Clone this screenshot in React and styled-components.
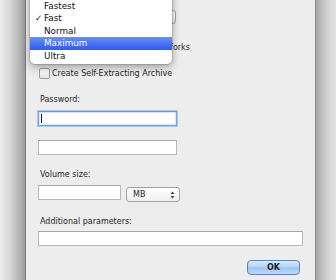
import React from "react";
import styled, { createGlobalStyle } from "styled-components";

const Global = createGlobalStyle`
  html, body { margin: 0; padding: 0; }
  body {
    width: 336px;
    height: 280px;
    overflow: hidden;
    font-family: "DejaVu Sans", "Noto Sans", sans-serif;
    -webkit-font-smoothing: antialiased;
  }
  * { box-sizing: border-box; }
`;

const Page = styled.div`
  display: flex;
  width: 336px;
  height: 280px;
  overflow: hidden;
`;

const Shade = styled.div`
  flex: ${(p) => (p.$side === "left" ? "0 0 25px" : "1 1 auto")};
  background: ${(p) =>
    p.$side === "left"
      ? "linear-gradient(to right, #ebebeb 0%, #d6d6d6 40%, #b2b2b2 80%, #9a9a9a 100%)"
      : "linear-gradient(to right, #a6a6a6 0%, #c4c4c4 35%, #d8d8d8 70%, #e2e2e2 100%)"};
`;

const Panel = styled.div`
  position: relative;
  flex: 0 0 291px;
  background: #ededed;
  border-left: 1px solid #7e7e7e;
  border-right: 1px solid #8c8c8c;
  padding: 10px 0 0 12px;
  display: flex;
  flex-direction: column;
  color: #262626;
  font-size: 8px;
`;

const PopupButton = styled.div`
  width: 138px;
  height: 14px;
  border: 1px solid #a3a3a3;
  border-radius: 3px;
  background: linear-gradient(#ffffff, #ececec);
`;

const CheckRow = styled.div`
  display: flex;
  align-items: center;
  gap: 2px;
  margin-top: ${(p) => p.$mt}px;
  margin-left: 1px;
  height: 11px;
  white-space: nowrap;
  line-height: 11px;
`;

const Checkbox = styled.span`
  width: 11px;
  height: 11px;
  flex: 0 0 11px;
  border: 1px solid #9b9b9b;
  border-radius: 2px;
  background: linear-gradient(#fdfdfd, #e6e6e6);
`;

const Label = styled.div`
  margin-top: ${(p) => p.$mt}px;
  padding-left: 2px;
  height: 10px;
  line-height: 10px;
  white-space: nowrap;
`;

const Field = styled.div`
  margin-top: ${(p) => p.$mt || 0}px;
  width: ${(p) => p.$w}px;
  height: 15px;
  background: #ffffff;
  border: 1px solid ${(p) => (p.$focus ? "#7aa2d6" : "#b8b8b8")};
  border-top-color: ${(p) => (p.$focus ? "#6f98d0" : "#a8a8a8")};
  box-shadow: ${(p) => (p.$focus ? "0 0 0 1px #a9c6ec, inset 0 0 0 1px #d8e6f7" : "none")};
  position: relative;
`;

const Caret = styled.span`
  position: absolute;
  left: 2px;
  top: 2px;
  width: 1px;
  height: 9px;
  background: #111;
`;

const Row = styled.div`
  display: flex;
  align-items: flex-start;
  gap: 5px;
  margin-top: ${(p) => p.$mt}px;
`;

const Select = styled.div`
  margin-top: 2px;
  width: 54px;
  height: 15px;
  border: 1px solid #a2a2a2;
  border-radius: 3px;
  background: linear-gradient(#ffffff, #efefef);
  display: flex;
  align-items: center;
  justify-content: space-between;
  padding: 0 4px 0 6px;
  font-size: 8px;
  color: #222;
`;

const ButtonRow = styled.div`
  display: flex;
  justify-content: flex-end;
  width: 262px;
  margin-top: ${(p) => p.$mt}px;
`;

const OkButton = styled.div`
  width: 53px;
  height: 15px;
  border: 1px solid #6283b8;
  border-radius: 4px;
  background: linear-gradient(#d9e9fc 0%, #b4d1f6 48%, #9fc3f2 52%, #bcd9fa 100%);
  display: flex;
  align-items: center;
  justify-content: center;
  font-weight: bold;
  font-size: 8px;
  color: #1c1c1c;
`;

const Menu = styled.div`
  position: absolute;
  left: 4px;
  top: -17px;
  width: 142px;
  padding: 4px 0 2px;
  background: #ffffff;
  border-radius: 0 0 5px 5px;
  box-shadow: 0 0 0 1px rgba(0, 0, 0, 0.12), 0 3px 9px rgba(0, 0, 0, 0.35);
  font-size: 8.8px;
  z-index: 5;
`;

const Item = styled.div`
  position: relative;
  height: 12.5px;
  line-height: 12.5px;
  padding-left: 14px;
  color: ${(p) => (p.$active ? "#ffffff" : "#111111")};
  background: ${(p) =>
    p.$active ? "linear-gradient(#6a8ff7 0%, #4a72f3 50%, #2f5bf0 100%)" : "transparent"};
`;

const Check = styled.span`
  position: absolute;
  left: 5px;
  top: 0;
`;

const items = ["Store", "Fastest", "Fast", "Normal", "Maximum", "Ultra"];

function Arrows() {
  return (
    <svg width="5" height="8" viewBox="0 0 5 8">
      <path d="M2.5 0.5 L4.5 3 H0.5 Z" fill="#444" />
      <path d="M2.5 7.5 L4.5 5 H0.5 Z" fill="#444" />
    </svg>
  );
}

export default function App() {
  return (
    <>
      <Global />
      <Page>
        <Shade $side="left" />
        <Panel>
          <Menu>
            {items.map((it) => (
              <Item key={it} $active={it === "Maximum"}>
                {it === "Fast" && <Check>✓</Check>}
                {it}
              </Item>
            ))}
          </Menu>
          <PopupButton />
          <CheckRow $mt={18}>
            <Checkbox />
            <span>Exclude Mac OS X's resource forks</span>
          </CheckRow>
          <CheckRow $mt={15}>
            <Checkbox />
            <span>Create Self-Extracting Archive</span>
          </CheckRow>
          <Label $mt={16}>Password:</Label>
          <Field $mt={6} $w={139} $focus>
            <Caret />
          </Field>
          <Field $mt={14} $w={139} />
          <Label $mt={15}>Volume size:</Label>
          <Row $mt={5}>
            <Field $w={83} />
            <Select>
              <span>MB</span>
              <Arrows />
            </Select>
          </Row>
          <Label $mt={15}>Additional parameters:</Label>
          <Field $mt={4} $w={265} />
          <ButtonRow $mt={14}>
            <OkButton>OK</OkButton>
          </ButtonRow>
        </Panel>
        <Shade $side="right" />
      </Page>
    </>
  );
}
